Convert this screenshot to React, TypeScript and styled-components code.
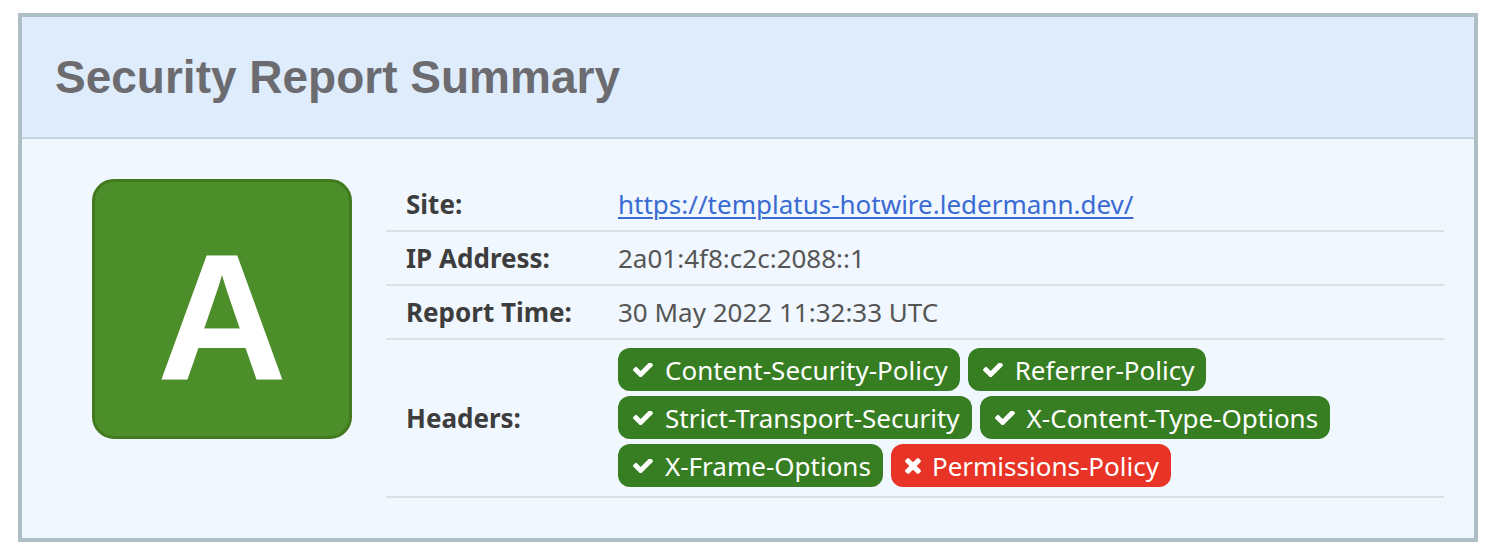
import React, { ReactElement } from 'react';
import styled, { createGlobalStyle } from 'styled-components';

interface HeaderCheck {
  name: string;
  ok: boolean;
}

const headers: HeaderCheck[] = [
  { name: 'Content-Security-Policy', ok: true },
  { name: 'Referrer-Policy', ok: true },
  { name: 'Strict-Transport-Security', ok: true },
  { name: 'X-Content-Type-Options', ok: true },
  { name: 'X-Frame-Options', ok: true },
  { name: 'Permissions-Policy', ok: false },
];

const CheckIcon = () => (
  <svg width="20" height="14" viewBox="121 420 1550 1050" fill="currentColor">
    <path d="M1671 566q0 40-28 68l-724 724-136 136q-28 28-68 28t-68-28l-136-136-362-362q-28-28-28-68t28-68l136-136q28-28 68-28t68 28l294 295 656-657q28-28 68-28t68 28l136 136q28 28 28 68z" />
  </svg>
);

const TimesIcon = () => (
  <svg width="16" height="16" viewBox="110 366 1188 1188" fill="currentColor">
    <path d="M1298 1322q0 40-28 68l-136 136q-28 28-68 28t-68-28l-294-294-294 294q-28 28-68 28t-68-28l-136-136q-28-28-28-68t28-68l294-294-294-294q-28-28-28-68t28-68l136-136q28-28 68-28t68 28l294 294 294-294q28-28 68-28t68 28l136 136q28 28 28 68t-28 68l-294 294 294 294q28 28 28 68z" />
  </svg>
);

export default function App(): ReactElement {
  return (
    <>
      <GlobalStyle />
      <StyledReport>
        <StyledHeader>
          <h1>Security Report Summary</h1>
        </StyledHeader>
        <StyledBody>
          <GradeBox>A</GradeBox>
          <InfoTable>
            <InfoRow>
              <InfoLabel>Site:</InfoLabel>
              <InfoValue>
                <SiteLink href="#">https://templatus-hotwire.ledermann.dev/</SiteLink>
              </InfoValue>
            </InfoRow>
            <InfoRow>
              <InfoLabel>IP Address:</InfoLabel>
              <InfoValue>2a01:4f8:c2c:2088::1</InfoValue>
            </InfoRow>
            <InfoRow>
              <InfoLabel>Report Time:</InfoLabel>
              <InfoValue>30 May 2022 11:32:33 UTC</InfoValue>
            </InfoRow>
            <InfoRow $tall>
              <InfoLabel>Headers:</InfoLabel>
              <BadgeList>
                {headers.map((h) => (
                  <Badge key={h.name} $ok={h.ok}>
                    {h.ok ? <CheckIcon /> : <TimesIcon />}
                    {h.name}
                  </Badge>
                ))}
              </BadgeList>
            </InfoRow>
          </InfoTable>
        </StyledBody>
      </StyledReport>
    </>
  );
}

const GlobalStyle = createGlobalStyle`
  body {
    margin: 13px 10px 0 18px;
    background: #ffffff;
    font-family: "Noto Sans", "Open Sans", sans-serif;
  }
`;

const StyledReport = styled.div`
  width: 1460px;
  box-sizing: border-box;
  border: 4px solid #adbfc4;
  background: #f0f7fe;
`;

const StyledHeader = styled.div`
  height: 122px;
  box-sizing: border-box;
  display: flex;
  align-items: center;
  padding-left: 33px;
  background: #dfecfc;
  border-bottom: 2px solid #c9d5de;

  h1 {
    margin: 0;
    font-family: "Liberation Sans", Arial, sans-serif;
    font-weight: 700;
    font-size: 46px;
    color: #6b6b70;
  }
`;

const StyledBody = styled.div`
  display: flex;
  align-items: flex-start;
  gap: 34px;
  padding: 40px 30px 40px 70px;
`;

const GradeBox = styled.div`
  flex: none;
  width: 260px;
  height: 260px;
  box-sizing: border-box;
  padding-top: 18px;
  display: flex;
  align-items: center;
  justify-content: center;
  border: 3px solid #42791f;
  border-radius: 22px;
  background: #4c8e2a;
  color: #ffffff;
  font-family: "Liberation Sans", Arial, sans-serif;
  font-weight: 700;
  font-size: 180px;
  line-height: 1;
`;

const InfoTable = styled.div`
  flex: 1;
  margin-top: -1px;
  display: flex;
  flex-direction: column;
`;

const InfoRow = styled.div<{ $tall?: boolean }>`
  display: flex;
  align-items: center;
  min-height: 52px;
  padding: ${({ $tall }) => ($tall ? '8px 0 9px' : '0')};
  border-bottom: 2px solid #dee1e4;
  font-size: 26px;
`;

const InfoLabel = styled.div`
  flex: none;
  width: 232px;
  box-sizing: border-box;
  padding-left: 20px;
  font-weight: 700;
  color: #3d3d3d;
`;

const InfoValue = styled.div`
  color: #555555;
`;

const SiteLink = styled.a`
  color: #3a6bd4;
  text-decoration: underline;
  text-underline-offset: 3px;
  text-decoration-thickness: 2px;
`;

const BadgeList = styled.div`
  flex: 1;
  display: flex;
  flex-wrap: wrap;
  gap: 5px 8px;
  padding-right: 20px;
`;

const Badge = styled.span<{ $ok: boolean }>`
  display: inline-flex;
  align-items: center;
  gap: ${({ $ok }) => ($ok ? '12px' : '11px')};
  height: 43px;
  box-sizing: border-box;
  padding: ${({ $ok }) => ($ok ? '0 12px 0 15px' : '0 12px 0 14px')};
  border-radius: 12px;
  background: ${({ $ok }) => ($ok ? '#377e22' : '#e73426')};
  color: #ffffff;
  font-size: 26px;
  white-space: nowrap;
`;
